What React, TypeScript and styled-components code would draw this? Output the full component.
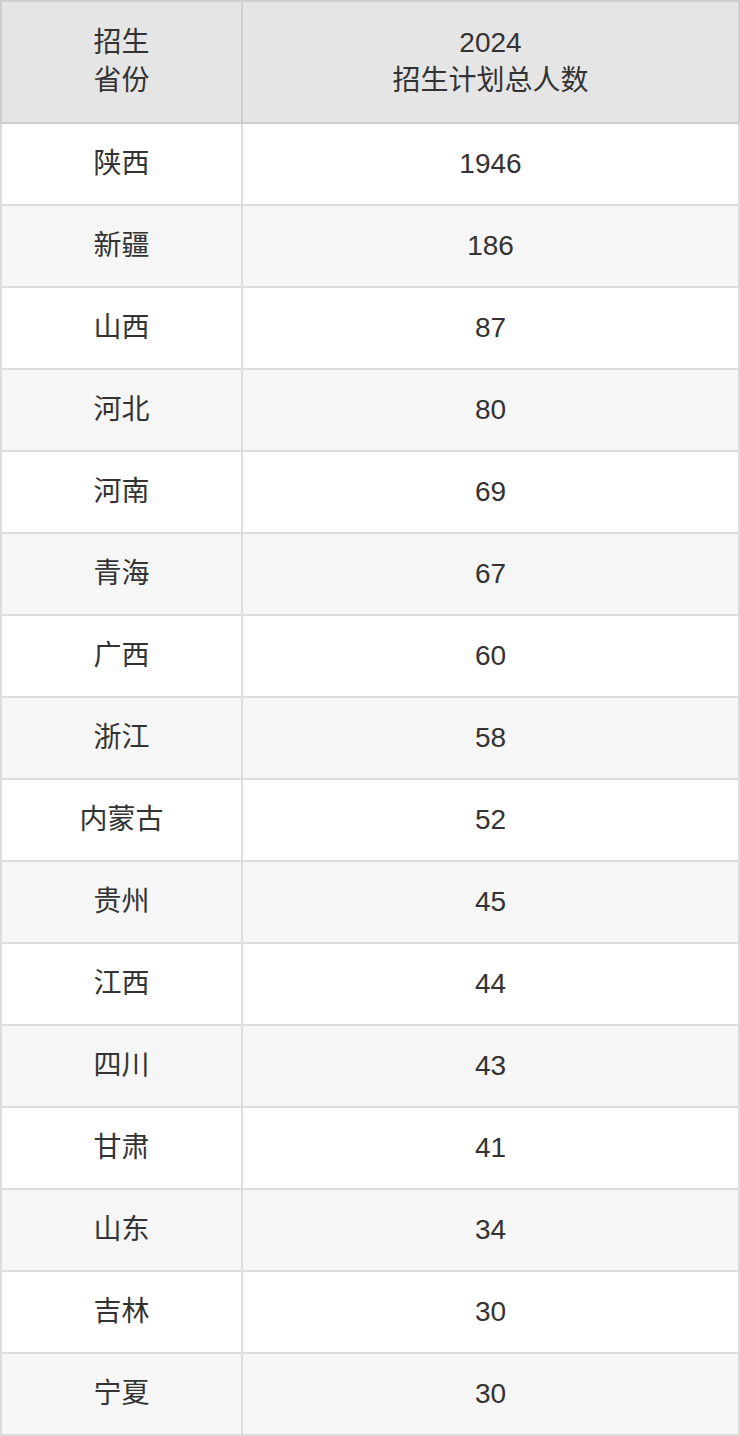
import React from 'react';
import styled, {createGlobalStyle} from "styled-components";

const GlobalStyle = createGlobalStyle`
    html, body {
        margin: 0;
        padding: 0;
        background: #fff;
    }
`;

const Table = styled.table`
    width: 740px;
    border-collapse: collapse;
    table-layout: fixed;
    font-family: "Liberation Sans", "Noto Sans CJK SC", sans-serif;
    font-size: 28px;
    color: #333;
`;

const HeadCell = styled.th<{ $width?: number }>`
    width: ${p => p.$width ? `${p.$width}px` : 'auto'};
    height: 120px;
    padding: 0;
    background: #e5e5e5;
    border: 2px solid #cfcfcf;
    font-weight: normal;
    line-height: 38px;
    text-align: center;
    vertical-align: middle;
`;

const Row = styled.tr<{ $striped: boolean }>`
    background: ${p => p.$striped ? '#f6f6f6' : '#fff'};
`;

const Cell = styled.td`
    height: 80px;
    padding: 0;
    border: 2px solid #dcdcdc;
    text-align: center;
    vertical-align: middle;
    line-height: 30px;
`;

const data: [string, number][] = [
    ['陕西', 1946],
    ['新疆', 186],
    ['山西', 87],
    ['河北', 80],
    ['河南', 69],
    ['青海', 67],
    ['广西', 60],
    ['浙江', 58],
    ['内蒙古', 52],
    ['贵州', 45],
    ['江西', 44],
    ['四川', 43],
    ['甘肃', 41],
    ['山东', 34],
    ['吉林', 30],
    ['宁夏', 30],
];

const App: React.FC = () => {
    return (
        <>
            <GlobalStyle/>
            <Table>
                <thead>
                <tr>
                    <HeadCell $width={239}>招生<br/>省份</HeadCell>
                    <HeadCell>2024<br/>招生计划总人数</HeadCell>
                </tr>
                </thead>
                <tbody>
                {data.map(([province, total], i) => (
                    <Row key={province} $striped={i % 2 === 1}>
                        <Cell>{province}</Cell>
                        <Cell>{total}</Cell>
                    </Row>
                ))}
                </tbody>
            </Table>
        </>
    );
};

export default App;
